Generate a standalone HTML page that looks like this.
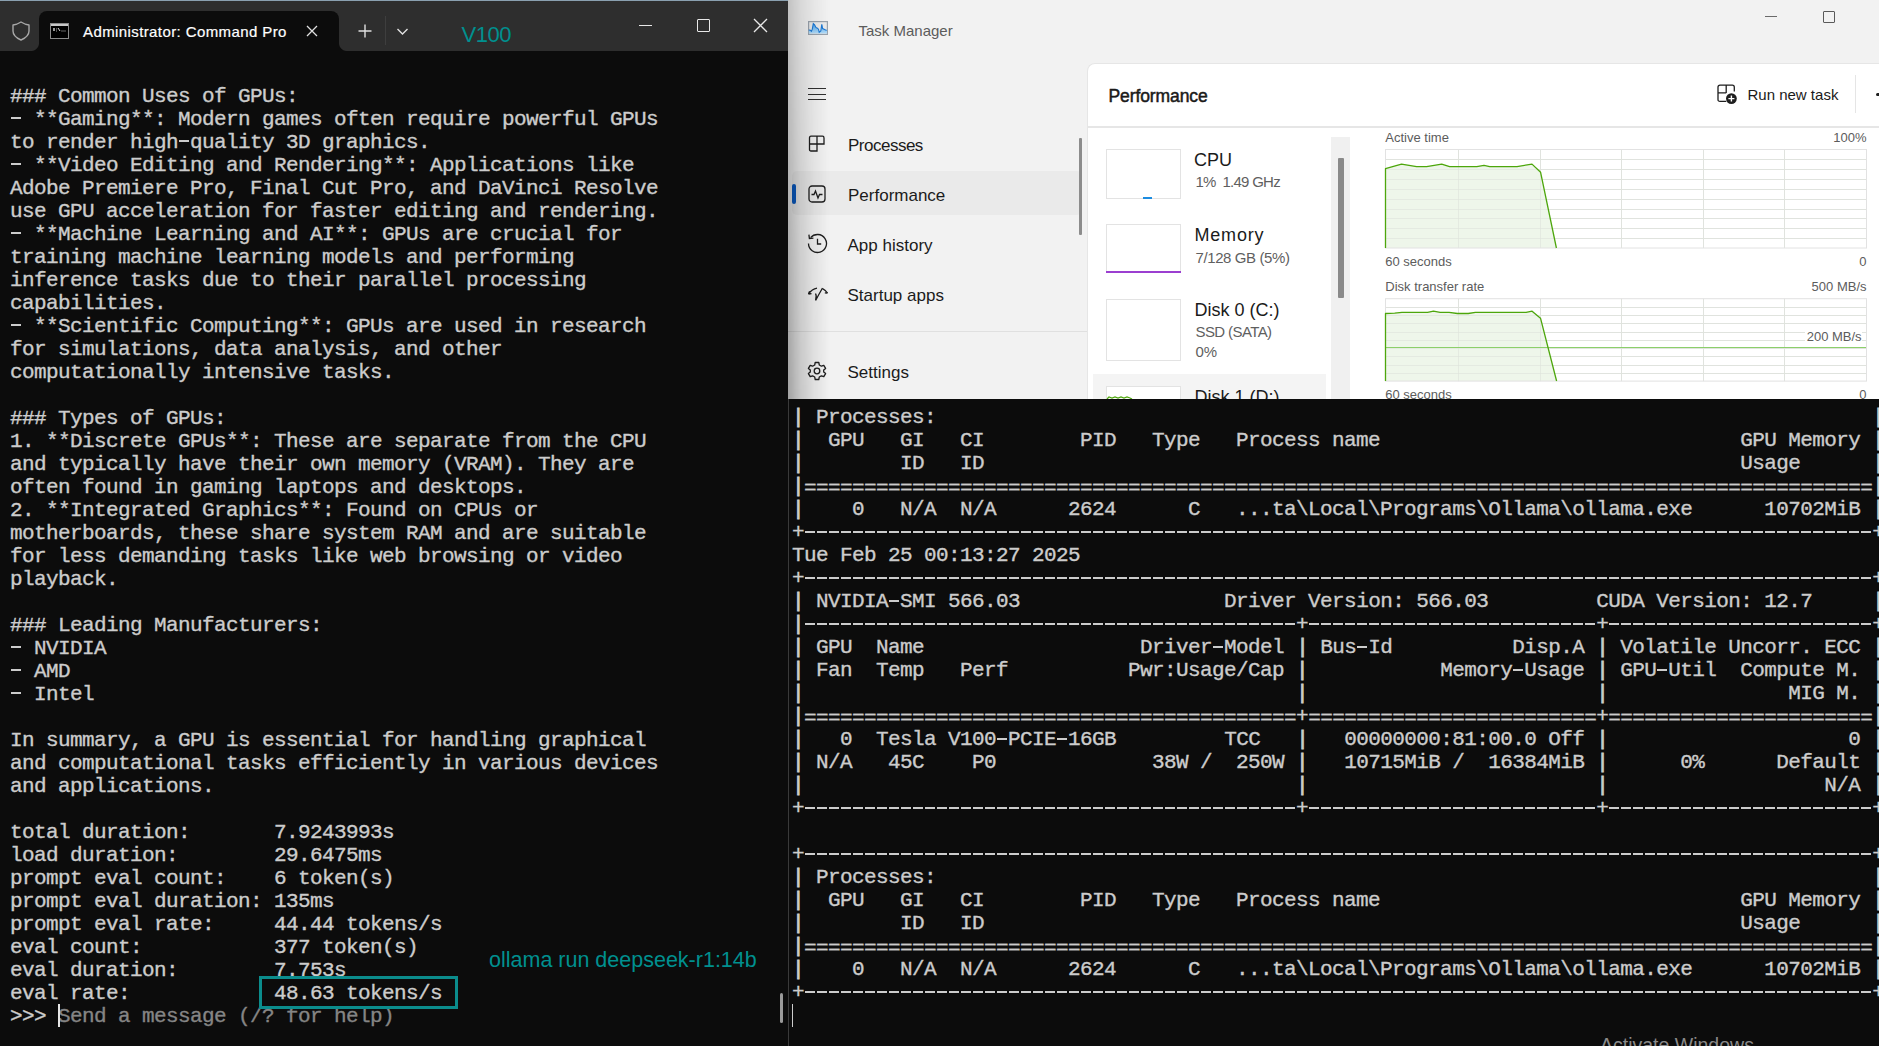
<!DOCTYPE html>
<html><head><meta charset="utf-8">
<style>
*{margin:0;padding:0;box-sizing:border-box}
html,body{width:1879px;height:1046px;overflow:hidden;background:#0c0c0c;position:relative}
.mono{font-family:"Liberation Mono",monospace;font-size:21px;letter-spacing:-0.6px;line-height:23px;color:#cccccc;-webkit-text-stroke:0.35px #cccccc;white-space:pre;position:absolute}
.s{font-family:"Liberation Sans",sans-serif;position:absolute;white-space:pre;line-height:1}
/* dash */
.d{color:transparent;-webkit-text-stroke:0;background-image:linear-gradient(to right,transparent 1px,#cccccc 1px,#cccccc 11px,transparent 11px);background-size:12px 2px;background-repeat:repeat-x;background-position:0 9.6px}
.e{position:relative;top:1.5px}
.p{-webkit-text-stroke:0.8px #cccccc}
#lt{position:absolute;left:0;top:0;width:788px;height:1046px;background:#0c0c0c;overflow:hidden}
#tm{position:absolute;left:788px;top:0;width:1091px;height:399px;background:#f2f2f2;overflow:hidden}
#rt{position:absolute;left:788px;top:399px;width:1091px;height:647px;background:#0c0c0c;overflow:hidden}
</style></head><body>
<div id="lt">
  <div style="position:absolute;left:0;top:0;width:788px;height:51px;background:#2e2e2e"></div>
  <div style="position:absolute;left:0;top:0;width:788px;height:1px;background:#8aa0b0"></div>
  <!-- tab -->
  <div style="position:absolute;left:39px;top:11px;width:300px;height:40px;background:#0c0c0c;border-radius:8px 8px 0 0"></div>
  <!-- inverted corners -->
  <div style="position:absolute;left:31px;top:43px;width:8px;height:8px;background:radial-gradient(circle at 0 0,#2e2e2e 7.5px,#0c0c0c 8.5px)"></div>
  <div style="position:absolute;left:339px;top:43px;width:8px;height:8px;background:radial-gradient(circle at 100% 0,#2e2e2e 7.5px,#0c0c0c 8.5px)"></div>
  <!-- shield -->
  <svg style="position:absolute;left:11px;top:21px" width="20" height="20" viewBox="0 0 20 20"><path d="M10 1 Q6 3.5 2 4 L2 10 Q2 15.5 10 19 Q18 15.5 18 10 L18 4 Q14 3.5 10 1 Z" fill="none" stroke="#a8a8a8" stroke-width="1.4" stroke-linejoin="round"/></svg>
  <!-- console icon -->
  <svg style="position:absolute;left:50px;top:23px" width="19" height="16" viewBox="0 0 19 16"><rect x="0.5" y="0.5" width="18" height="15" fill="#000" stroke="#8a8a8a"/><rect x="1" y="1" width="17" height="2" fill="#c8c8c8"/><path d="M3 5 h2 v3 h-2z M6 5.5 h1 v1 h-1z M6 7.5 h1 v1 h-1z" fill="#9a9a9a"/><path d="M8 5 L10 8" stroke="#ddd" stroke-width="1"/><path d="M11 8 h5" stroke="#666" stroke-width="1"/></svg>
  <div class="s" style="left:83px;top:24.3px;font-size:15px;color:#ffffff;letter-spacing:0.4px;-webkit-text-stroke:0.2px #fff">Administrator: Command Pro</div>
  <!-- tab close -->
  <svg style="position:absolute;left:306px;top:25px" width="12" height="12" viewBox="0 0 12 12"><path d="M1 1 L11 11 M11 1 L1 11" stroke="#e0e0e0" stroke-width="1.3"/></svg>
  <!-- plus -->
  <svg style="position:absolute;left:358px;top:24px" width="14" height="14" viewBox="0 0 14 14"><path d="M7 0.5 V13.5 M0.5 7 H13.5" stroke="#e0e0e0" stroke-width="1.4"/></svg>
  <div style="position:absolute;left:385px;top:16px;width:1px;height:29px;background:#3e3e3e"></div>
  <svg style="position:absolute;left:396px;top:27px" width="13" height="9" viewBox="0 0 13 9"><path d="M1.5 2 L6.5 7 L11.5 2" fill="none" stroke="#e0e0e0" stroke-width="1.4"/></svg>
  <div class="s" style="left:461.5px;top:24.4px;font-size:22px;letter-spacing:-0.5px;color:#00908f">V100</div>
  <!-- window controls -->
  <div style="position:absolute;left:639px;top:24.5px;width:13px;height:1.3px;background:#e8e8e8"></div>
  <div style="position:absolute;left:697px;top:19px;width:13px;height:13px;border:1.3px solid #e8e8e8;border-radius:1px"></div>
  <svg style="position:absolute;left:753px;top:18px" width="15" height="15" viewBox="0 0 15 15"><path d="M1 1 L14 14 M14 1 L1 14" stroke="#e8e8e8" stroke-width="1.3"/></svg>
  <div class="mono" style="left:10px;top:84.9px">### Common Uses of GPUs:
<span class="d">-</span> **Gaming**: Modern games often require powerful GPUs
to render high<span class="d">-</span>quality 3D graphics.
<span class="d">-</span> **Video Editing and Rendering**: Applications like
Adobe Premiere Pro, Final Cut Pro, and DaVinci Resolve
use GPU acceleration for faster editing and rendering.
<span class="d">-</span> **Machine Learning and AI**: GPUs are crucial for
training machine learning models and performing
inference tasks due to their parallel processing
capabilities.
<span class="d">-</span> **Scientific Computing**: GPUs are used in research
for simulations, data analysis, and other
computationally intensive tasks.

### Types of GPUs:
1. **Discrete GPUs**: These are separate from the CPU
and typically have their own memory (VRAM). They are
often found in gaming laptops and desktops.
2. **Integrated Graphics**: Found on CPUs or
motherboards, these share system RAM and are suitable
for less demanding tasks like web browsing or video
playback.

### Leading Manufacturers:
<span class="d">-</span> NVIDIA
<span class="d">-</span> AMD
<span class="d">-</span> Intel

In summary, a GPU is essential for handling graphical
and computational tasks efficiently in various devices
and applications.

total duration:       7.9243993s
load duration:        29.6475ms
prompt eval count:    6 token(s)
prompt eval duration: 135ms
prompt eval rate:     44.44 tokens/s
eval count:           377 token(s)
eval duration:        7.753s
eval rate:            48.63 tokens/s
&gt;&gt;&gt; <span style="color:#858585;-webkit-text-stroke:0.35px #858585">Send a message (/? for help)</span></div>
  <!-- cursor -->
  <div style="position:absolute;left:58px;top:1004px;width:1.5px;height:23px;background:#e6e6e6"></div>
  <!-- scrollbar -->
  <div style="position:absolute;left:779.5px;top:993px;width:3px;height:30px;background:#9a9a9a;border-radius:1.5px"></div>
  <!-- annotation -->
  <div class="s" style="left:489px;top:949.5px;font-size:21.5px;color:#00908f">ollama run deepseek-r1:14b</div>
  <div style="position:absolute;left:259px;top:976px;width:199px;height:33px;border:3px solid #0b8c8c"></div>
</div>
<div id="tm">
<svg style="position:absolute;left:20px;top:21px" width="20" height="14" viewBox="0 0 20 14"><defs><linearGradient id="tmg" x1="0" y1="0" x2="0" y2="1"><stop offset="0" stop-color="#4aa3ea"/><stop offset="1" stop-color="#b8e0fb"/></linearGradient></defs><rect x="0.6" y="0.6" width="18.8" height="12.8" fill="#ebebeb" stroke="#9aa3ad" stroke-width="1.2"/><polygon points="0.8,12.6 0.8,9 2.5,9.3 3.4,10.3 4.3,8.2 5.3,2.6 6.6,3.9 7.9,6.4 9.4,7.2 10.5,8.2 11.2,11.3 12.8,10 13.8,3.3 14.6,7.5 16.1,8.2 17.6,9 18.8,9.3 19.2,12.6" fill="url(#tmg)"/><polyline points="0.8,9 2.5,9.3 3.4,10.3 4.3,8.2 5.3,2.6 6.6,3.9 7.9,6.4 9.4,7.2 10.5,8.2 11.2,11.3 12.8,10 13.8,3.3 14.6,7.5 16.1,8.2 17.6,9 18.8,9.3" fill="none" stroke="#1a78d6" stroke-width="1.1"/></svg>
<div class="s" style="left:70.5px;top:23.3px;font-size:15px;color:#5c5c5c;font-weight:400;letter-spacing:0px;">Task Manager</div>
<div style="position:absolute;left:977px;top:16px;width:12px;height:1px;background:#6a6a6a"></div>
<div style="position:absolute;left:1035px;top:11px;width:12px;height:12px;border:1px solid #5a5a5a;border-radius:1px"></div>
<div style="position:absolute;left:20px;top:88px;width:18px;height:1.4px;background:#303030"></div>
<div style="position:absolute;left:20px;top:94px;width:18px;height:1.4px;background:#303030"></div>
<div style="position:absolute;left:20px;top:99px;width:18px;height:1.4px;background:#303030"></div>
<div style="position:absolute;left:4px;top:171px;width:290px;height:44px;background:#eaeaea;border-radius:5px"></div>
<div style="position:absolute;left:4px;top:184px;width:4px;height:20px;background:#0a5bc4;border-radius:2px"></div>
<div style="position:absolute;left:291px;top:138px;width:2.5px;height:97px;background:#8c8c8c;border-radius:1px"></div>
<div style="position:absolute;left:0;top:331px;width:300px;height:1px;background:#e0e0e0"></div>
<svg style="position:absolute;left:20px;top:135px" width="18" height="18" viewBox="0 0 18 18"><path d="M1.5 3 Q1.5 1.2 3 1.2 L14.5 1.2 Q16 1.2 16 3 L16 9 L9 9 L9 16 L3 16 Q1.5 16 1.5 14.5 Z M1.5 9 L9 9 M9 1.2 L9 9" fill="none" stroke="#1e1e1e" stroke-width="1.3"/></svg>
<svg style="position:absolute;left:20px;top:185px" width="18" height="18" viewBox="0 0 18 18"><rect x="1" y="1" width="16" height="16" rx="3" fill="none" stroke="#1e1e1e" stroke-width="1.3"/><path d="M3.5 9.5 L6 9.5 L7.5 6 L10 13 L11.5 9.5 L14.5 9.5" fill="none" stroke="#1e1e1e" stroke-width="1.3"/></svg>
<svg style="position:absolute;left:19px;top:233px" width="21" height="21" viewBox="0 0 21 21"><path d="M3.6 4.7 A9 9 0 1 1 1.5 10.5" fill="none" stroke="#1e1e1e" stroke-width="1.3"/><path d="M1.9 1.6 L2.4 5.6 L6.4 5.2" fill="none" stroke="#1e1e1e" stroke-width="1.3"/><path d="M10.5 5.8 L10.5 11 L14.2 11" fill="none" stroke="#1e1e1e" stroke-width="1.3"/></svg>
<svg style="position:absolute;left:19px;top:285px" width="22" height="17" viewBox="0 0 22 17"><path d="M1.5 9 Q5 4 10 3.2" fill="none" stroke="#1e1e1e" stroke-width="1.3"/><path d="M1.5 9 L4.5 8.6 M1.5 9 L2.6 6.2" fill="none" stroke="#1e1e1e" stroke-width="1.3"/><path d="M15.5 3.6 Q18.5 5 20.5 8" fill="none" stroke="#1e1e1e" stroke-width="1.3"/><path d="M20.5 8 L17.8 7.8" fill="none" stroke="#1e1e1e" stroke-width="1.3"/><path d="M8.5 8.5 Q10 11 8.6 15.5 Q11.5 10 15.5 3" fill="none" stroke="#1e1e1e" stroke-width="1.3" stroke-width="1.5"/></svg>
<svg style="position:absolute;left:19px;top:361px" width="20" height="20" viewBox="0 0 20 20"><path d="M8.2 1.5 L11.8 1.5 L12.3 4 L14.4 5.2 L16.8 4.3 L18.6 7.4 L16.7 9 L16.7 11 L18.6 12.6 L16.8 15.7 L14.4 14.8 L12.3 16 L11.8 18.5 L8.2 18.5 L7.7 16 L5.6 14.8 L3.2 15.7 L1.4 12.6 L3.3 11 L3.3 9 L1.4 7.4 L3.2 4.3 L5.6 5.2 L7.7 4 Z" fill="none" stroke="#1e1e1e" stroke-width="1.3" stroke-linejoin="round"/><circle cx="10" cy="10" r="2.8" fill="none" stroke="#1e1e1e" stroke-width="1.3"/></svg>
<div class="s" style="left:60.0px;top:136.6px;font-size:17px;color:#1b1b1b;font-weight:400;letter-spacing:-0.5px;">Processes</div>
<div class="s" style="left:60.0px;top:186.5px;font-size:17px;color:#1b1b1b;font-weight:400;letter-spacing:0px;">Performance</div>
<div class="s" style="left:59.5px;top:237.1px;font-size:17px;color:#1b1b1b;font-weight:400;letter-spacing:0px;">App history</div>
<div class="s" style="left:59.5px;top:286.5px;font-size:17px;color:#1b1b1b;font-weight:400;letter-spacing:0px;">Startup apps</div>
<div class="s" style="left:59.5px;top:363.6px;font-size:17px;color:#1b1b1b;font-weight:400;letter-spacing:0px;">Settings</div>
<div style="position:absolute;left:299px;top:63px;width:800px;height:400px;background:#ffffff;border-radius:8px 0 0 0;border-left:1px solid #e6e6e6;border-top:1px solid #e6e6e6"></div>
<div style="position:absolute;left:300px;top:126px;width:800px;height:1.5px;background:#e6e6e6"></div>
<div class="s" style="left:320.5px;top:88.2px;font-size:17.5px;color:#1a1a1a;font-weight:400;letter-spacing:-0.1px;-webkit-text-stroke:0.5px #1a1a1a;">Performance</div>
<svg style="position:absolute;left:929px;top:84px" width="22" height="22" viewBox="0 0 22 22"><path d="M9.3 17.4 L3 17.4 Q1 17.4 1 15.4 L1 3.2 Q1 1.2 3 1.2 L15.3 1.2 Q17.3 1.2 17.3 3.2 L17.3 7.6 M1 8.9 L9.2 8.9 M9.2 1.2 L9.2 8.9" fill="none" stroke="#1e1e1e" stroke-width="1.3"/><circle cx="14.4" cy="14.6" r="5.4" fill="#1e1e1e"/><path d="M14.4 11.6 V17.6 M11.4 14.6 H17.4" stroke="#fff" stroke-width="1.4"/></svg>
<div class="s" style="left:959.5px;top:87.3px;font-size:15px;color:#1a1a1a;font-weight:400;letter-spacing:0px;">Run new task</div>
<div style="position:absolute;left:1067px;top:75px;width:1px;height:38px;background:#e5e5e5"></div>
<div style="position:absolute;left:1088px;top:92.5px;width:3.5px;height:3.5px;border-radius:50%;background:#1e1e1e"></div>
<div style="position:absolute;left:543px;top:137px;width:19px;height:262px;background:#f0f0f0"></div>
<div style="position:absolute;left:550px;top:158px;width:6px;height:140px;background:#8a8a8a;border-radius:1px"></div>
<div style="position:absolute;left:305px;top:374px;width:233px;height:40px;background:#f4f4f4"></div>
<div style="position:absolute;left:318px;top:149px;width:75px;height:50px;background:#fff;border:1px solid #e3e3e3"></div>
<div style="position:absolute;left:318px;top:224px;width:75px;height:49px;background:#fff;border:1px solid #e3e3e3"></div>
<div style="position:absolute;left:318px;top:299px;width:75px;height:62px;background:#fff;border:1px solid #e3e3e3"></div>
<div style="position:absolute;left:318px;top:386px;width:75px;height:54px;background:#fff;border:1px solid #e3e3e3"></div>
<div style="position:absolute;left:355px;top:197px;width:9px;height:1.5px;background:#1c8ce0"></div>
<div style="position:absolute;left:318px;top:271px;width:75px;height:1.5px;background:#9b3fd0"></div>
<svg style="position:absolute;left:318px;top:393px" width="30" height="8"><path d="M1 6 L3 4 L6 5 L9 4 L12 5 L15 4 L18 5 L21 4 L24 5 L26 6" fill="none" stroke="#4da60c" stroke-width="1.2"/></svg>
<div class="s" style="left:406.0px;top:150.5px;font-size:18px;color:#1b1b1b;font-weight:400;letter-spacing:0px;">CPU</div>
<div class="s" style="left:407.5px;top:174.3px;font-size:15px;color:#5f5f5f;font-weight:400;letter-spacing:-0.75px;">1%&nbsp; 1.49 GHz</div>
<div class="s" style="left:406.5px;top:226.0px;font-size:18px;color:#1b1b1b;font-weight:400;letter-spacing:0.8px;">Memory</div>
<div class="s" style="left:407.5px;top:250.0px;font-size:15px;color:#5f5f5f;font-weight:400;letter-spacing:-0.4px;">7/128 GB (5%)</div>
<div class="s" style="left:406.5px;top:300.5px;font-size:18px;color:#1b1b1b;font-weight:400;letter-spacing:0px;">Disk 0 (C:)</div>
<div class="s" style="left:407.5px;top:324.3px;font-size:15px;color:#5f5f5f;font-weight:400;letter-spacing:-0.6px;">SSD (SATA)</div>
<div class="s" style="left:407.5px;top:344.0px;font-size:15px;color:#5f5f5f;font-weight:400;letter-spacing:0px;">0%</div>
<div class="s" style="left:406.5px;top:387.5px;font-size:18px;color:#1b1b1b;font-weight:400;letter-spacing:0px;">Disk 1 (D:)</div>
<svg style="position:absolute;left:0;top:0" width="1091" height="399"><path d="M597.5 159.5 H1078.5 M597.5 169.5 H1078.5 M597.5 179.5 H1078.5 M597.5 189.5 H1078.5 M597.5 199.5 H1078.5 M597.5 209.5 H1078.5 M597.5 218.5 H1078.5 M597.5 228.5 H1078.5 M597.5 238.5 H1078.5 M670.5 149.5 V248 M752.5 149.5 V248 M833.5 149.5 V248 M915.5 149.5 V248 M996.5 149.5 V248" stroke="#e4e4e4" stroke-width="1" fill="none"/><polygon points="597.5,248 597.5,168.7 613.5,164.1 628.6,166.6 638.6,166.6 653.7,164.1 661.6,166.6 688.8,166.6 696.0,165.4 701.7,166.6 729.0,166.6 744.0,164.1 752.6,172.3 768.4,248.0 768.4,248" fill="#eef6ea"/><path d="M597.5 159.5 H1078.5 M597.5 169.5 H1078.5 M597.5 179.5 H1078.5 M597.5 189.5 H1078.5 M597.5 199.5 H1078.5 M597.5 209.5 H1078.5 M597.5 218.5 H1078.5 M597.5 228.5 H1078.5 M597.5 238.5 H1078.5 M670.5 149.5 V248 M752.5 149.5 V248 M833.5 149.5 V248 M915.5 149.5 V248 M996.5 149.5 V248" stroke="#dde3da" stroke-opacity="0.6" stroke-width="1" fill="none"/><rect x="597.5" y="149.5" width="481.0" height="98.5" fill="none" stroke="#e2e2e2"/><polyline points="597.5,248 597.5,168.7 613.5,164.1 628.6,166.6 638.6,166.6 653.7,164.1 661.6,166.6 688.8,166.6 696.0,165.4 701.7,166.6 729.0,166.6 744.0,164.1 752.6,172.3 768.4,248.0" fill="none" stroke="#4da60c" stroke-width="1.3" stroke-linejoin="round"/><path d="M597.5 307.5 H1078.5 M597.5 315.5 H1078.5 M597.5 323.5 H1078.5 M597.5 332.5 H1078.5 M597.5 340.5 H1078.5 M597.5 348.5 H1078.5 M597.5 356.5 H1078.5 M597.5 365.5 H1078.5 M597.5 373.5 H1078.5 M670.5 298.7 V381.1 M752.5 298.7 V381.1 M833.5 298.7 V381.1 M915.5 298.7 V381.1 M996.5 298.7 V381.1" stroke="#e4e4e4" stroke-width="1" fill="none"/><polygon points="597.5,381.1 597.5,313.5 606.7,313.2 613.9,312.4 639.6,312.4 645.5,311.2 652.1,312.4 661.1,312.4 669.4,313.5 680.2,313.5 687.4,312.4 738.1,312.4 744.1,311.2 752.5,318.2 768.6,381.0 768.6,381.1" fill="#eef6ea"/><path d="M597.5 307.5 H1078.5 M597.5 315.5 H1078.5 M597.5 323.5 H1078.5 M597.5 332.5 H1078.5 M597.5 340.5 H1078.5 M597.5 348.5 H1078.5 M597.5 356.5 H1078.5 M597.5 365.5 H1078.5 M597.5 373.5 H1078.5 M670.5 298.7 V381.1 M752.5 298.7 V381.1 M833.5 298.7 V381.1 M915.5 298.7 V381.1 M996.5 298.7 V381.1" stroke="#dde3da" stroke-opacity="0.6" stroke-width="1" fill="none"/><path d="M597.5 347.5 H1078.5" stroke="#8ccf6a" stroke-width="1.2"/><rect x="597.5" y="298.7" width="481.0" height="82.40000000000003" fill="none" stroke="#e2e2e2"/><polyline points="597.5,381.1 597.5,313.5 606.7,313.2 613.9,312.4 639.6,312.4 645.5,311.2 652.1,312.4 661.1,312.4 669.4,313.5 680.2,313.5 687.4,312.4 738.1,312.4 744.1,311.2 752.5,318.2 768.6,381.0" fill="none" stroke="#4da60c" stroke-width="1.3" stroke-linejoin="round"/></svg>
<div class="s" style="left:597.3px;top:131.0px;font-size:13px;color:#5c5c5c;font-weight:400;letter-spacing:0px;">Active time</div>
<div class="s" style="right:12.5px;top:131.0px;font-size:13px;color:#5c5c5c;letter-spacing:0px">100%</div>
<div class="s" style="left:597.3px;top:254.5px;font-size:13px;color:#5c5c5c;font-weight:400;letter-spacing:0px;">60 seconds</div>
<div class="s" style="right:12.5px;top:254.5px;font-size:13px;color:#5c5c5c;letter-spacing:0px">0</div>
<div class="s" style="left:597.3px;top:279.5px;font-size:13px;color:#5c5c5c;font-weight:400;letter-spacing:0px;">Disk transfer rate</div>
<div class="s" style="right:12.5px;top:279.5px;font-size:13px;color:#5c5c5c;letter-spacing:0px">500 MB/s</div>
<div class="s" style="right:17.4px;top:330.0px;font-size:13px;color:#5c5c5c;background:#fff;padding:0 0 2px 2px;letter-spacing:0px">200 MB/s</div>
<div class="s" style="left:597.3px;top:388.3px;font-size:13px;color:#5c5c5c;font-weight:400;letter-spacing:0px;">60 seconds</div>
<div class="s" style="right:12.5px;top:388.3px;font-size:13px;color:#5c5c5c;letter-spacing:0px">0</div>
<div style="position:absolute;left:0;top:0;width:42px;height:399px;background:linear-gradient(to right,rgba(0,0,0,0.33) 0px,rgba(0,0,0,0.18) 12px,rgba(0,0,0,0.08) 26px,rgba(0,0,0,0) 42px);-webkit-mask-image:linear-gradient(to bottom,rgba(0,0,0,0.6),#000)"></div>
</div>

<div id="rt">
  <div style="position:absolute;left:0;top:0;width:1px;height:647px;background:#3a3a3a"></div>
  <div class="mono" style="left:4px;top:7.4px"><span class="p">|</span> Processes:                                                                              <span class="p">|</span>
<span class="p">|</span>  GPU   GI   CI        PID   Type   Process name                              GPU Memory <span class="p">|</span>
<span class="p">|</span>        ID   ID                                                               Usage      <span class="p">|</span>
<span class="p">|</span><span class="e">=========================================================================================</span><span class="p">|</span>
<span class="p">|</span>    0   N/A  N/A      2624      C   ...ta\Local\Programs\Ollama\ollama.exe      10702MiB <span class="p">|</span>
+<span class="d">-----------------------------------------------------------------------------------------</span>+
Tue Feb 25 00:13:27 2025
+<span class="d">-----------------------------------------------------------------------------------------</span>+
<span class="p">|</span> NVIDIA<span class="d">-</span>SMI 566.03                 Driver Version: 566.03         CUDA Version: 12.7     <span class="p">|</span>
<span class="p">|</span><span class="d">-----------------------------------------</span>+<span class="d">------------------------</span>+<span class="d">----------------------</span>+
<span class="p">|</span> GPU  Name                  Driver<span class="d">-</span>Model <span class="p">|</span> Bus<span class="d">-</span>Id          Disp.A <span class="p">|</span> Volatile Uncorr. ECC <span class="p">|</span>
<span class="p">|</span> Fan  Temp   Perf          Pwr:Usage/Cap <span class="p">|</span>           Memory<span class="d">-</span>Usage <span class="p">|</span> GPU<span class="d">-</span>Util  Compute M. <span class="p">|</span>
<span class="p">|</span>                                         <span class="p">|</span>                        <span class="p">|</span>               MIG M. <span class="p">|</span>
<span class="p">|</span><span class="e">=========================================</span>+<span class="e">========================</span>+<span class="e">======================</span><span class="p">|</span>
<span class="p">|</span>   0  Tesla V100<span class="d">-</span>PCIE<span class="d">-</span>16GB         TCC   <span class="p">|</span>   00000000:81:00.0 Off <span class="p">|</span>                    0 <span class="p">|</span>
<span class="p">|</span> N/A   45C    P0             38W /  250W <span class="p">|</span>   10715MiB /  16384MiB <span class="p">|</span>      0%      Default <span class="p">|</span>
<span class="p">|</span>                                         <span class="p">|</span>                        <span class="p">|</span>                  N/A <span class="p">|</span>
+<span class="d">-----------------------------------------</span>+<span class="d">------------------------</span>+<span class="d">----------------------</span>+

+<span class="d">-----------------------------------------------------------------------------------------</span>+
<span class="p">|</span> Processes:                                                                              <span class="p">|</span>
<span class="p">|</span>  GPU   GI   CI        PID   Type   Process name                              GPU Memory <span class="p">|</span>
<span class="p">|</span>        ID   ID                                                               Usage      <span class="p">|</span>
<span class="p">|</span><span class="e">=========================================================================================</span><span class="p">|</span>
<span class="p">|</span>    0   N/A  N/A      2624      C   ...ta\Local\Programs\Ollama\ollama.exe      10702MiB <span class="p">|</span>
+<span class="d">-----------------------------------------------------------------------------------------</span>+</div>
  <div style="position:absolute;left:4px;top:605px;width:1px;height:23px;background:#cccccc"></div>
  <div class="s" style="left:812px;top:637px;font-size:19.5px;color:#8a8a8a">Activate Windows</div>
</div>
</body></html>
